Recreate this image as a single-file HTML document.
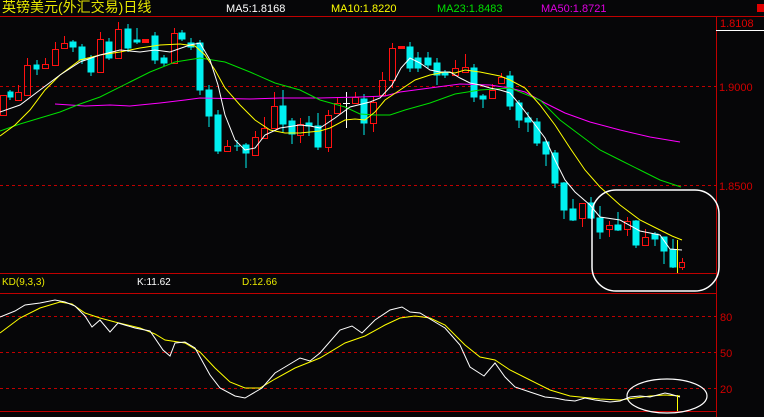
<!DOCTYPE html>
<html><head><meta charset="utf-8"><style>
html,body{margin:0;padding:0;background:#060608;width:764px;height:417px;overflow:hidden}
svg{display:block}
text{font-family:"Liberation Sans","Noto Sans CJK SC",sans-serif}
</style></head><body>
<svg width="764" height="417" viewBox="0 0 764 417" xmlns="http://www.w3.org/2000/svg" shape-rendering="crispEdges">
<rect width="764" height="417" fill="#060608"/>
<!-- header -->
<text x="2" y="12" font-size="14" fill="#e8e800">英镑美元(外汇交易)日线</text>
<text x="226" y="12" font-size="11" fill="#ffffff">MA5:1.8168</text>
<text x="331" y="12" font-size="11" fill="#ffff00">MA10:1.8220</text>
<text x="437" y="12" font-size="11" fill="#00e000">MA23:1.8483</text>
<text x="541" y="12" font-size="11" fill="#e000e0">MA50:1.8721</text>
<rect x="757" y="4" width="7" height="8" fill="#e00000"/>
<!-- frame -->
<line x1="0" y1="16.5" x2="764" y2="16.5" stroke="#c00000"/>
<line x1="716.5" y1="16" x2="716.5" y2="417" stroke="#c00000"/>
<line x1="0" y1="273.5" x2="716" y2="273.5" stroke="#c00000"/>
<line x1="0" y1="293.5" x2="716" y2="293.5" stroke="#c00000"/>
<line x1="0" y1="411.5" x2="716" y2="411.5" stroke="#c00000"/>
<line x1="716" y1="30.5" x2="764" y2="30.5" stroke="#ffffff"/>
<text x="720" y="27" font-size="11" fill="#e00000">1.8108</text>
<g stroke="#c00000" stroke-dasharray="3,3">
<line x1="0" y1="86.5" x2="716" y2="86.5"/>
<line x1="0" y1="185.5" x2="716" y2="185.5"/>
<line x1="0" y1="316.5" x2="716" y2="316.5"/>
<line x1="0" y1="352.5" x2="716" y2="352.5"/>
<line x1="0" y1="388.5" x2="716" y2="388.5"/>
</g>
<g font-size="11" fill="#d00000">
<text x="719" y="91">1.9000</text>
<text x="719" y="190">1.8500</text>
<text x="720" y="321">80</text>
<text x="720" y="357">50</text>
<text x="720" y="393">20</text>
</g>
<text x="2" y="285" font-size="10" fill="#e8e800">KD(9,3,3)</text>
<text x="137" y="285" font-size="10" fill="#ffffff">K:11.62</text>
<text x="242" y="285" font-size="10" fill="#e8e800">D:12.66</text>

<!-- candles -->
<g id="c"></g>
<g fill="#00f0f0" stroke="#00f0f0">
<line x1="10" y1="90" x2="10" y2="100"/><rect x="8" y="92" width="5" height="5"/>
<line x1="37" y1="60" x2="37" y2="75"/><rect x="34" y="65" width="5" height="4"/>
<line x1="73" y1="40" x2="73" y2="52"/><rect x="70" y="42" width="6" height="5"/>
<line x1="82" y1="44" x2="82" y2="64"/><rect x="79" y="47" width="6" height="13"/>
<line x1="91" y1="55" x2="91" y2="76"/><rect x="88" y="58" width="6" height="14"/>
<line x1="109" y1="38" x2="109" y2="60"/><rect x="106" y="42" width="6" height="16"/>
<line x1="128" y1="24" x2="128" y2="52"/><rect x="125" y="29" width="6" height="19"/>
<line x1="137" y1="28" x2="137" y2="44"/><rect x="134" y="40" width="6" height="2"/>
<line x1="155" y1="32" x2="155" y2="64"/><rect x="152" y="36" width="6" height="24"/>
<line x1="164" y1="55" x2="164" y2="66"/><rect x="161" y="58" width="6" height="5"/>
<line x1="182" y1="30" x2="182" y2="41"/><rect x="179" y="33" width="6" height="6"/>
<line x1="191" y1="38" x2="191" y2="50"/><rect x="188" y="43" width="6" height="4"/>
<line x1="200" y1="40" x2="200" y2="95"/><rect x="197" y="43" width="6" height="47"/>
<line x1="209" y1="85" x2="209" y2="127"/><rect x="206" y="90" width="6" height="26"/>
<line x1="218" y1="110" x2="218" y2="154"/><rect x="215" y="115" width="6" height="36"/>
<line x1="237" y1="140" x2="237" y2="151"/><line x1="234" y1="146" x2="240" y2="146"/>
<line x1="246" y1="143" x2="246" y2="168"/><rect x="243" y="145" width="6" height="8"/>
<line x1="283" y1="90" x2="283" y2="132"/><rect x="280" y="106" width="6" height="18"/>
<line x1="292" y1="118" x2="292" y2="144"/><rect x="289" y="121" width="6" height="13"/>
<line x1="309" y1="116" x2="309" y2="136"/><rect x="306" y="123" width="6" height="3"/>
<line x1="318" y1="113" x2="318" y2="150"/><rect x="315" y="126" width="6" height="21"/>
<line x1="364" y1="94" x2="364" y2="135"/><rect x="361" y="99" width="6" height="24"/>
<line x1="410" y1="42" x2="410" y2="72"/><rect x="407" y="47" width="6" height="21"/>
<line x1="418" y1="52" x2="418" y2="72"/><rect x="415" y="58" width="6" height="10"/>
<line x1="428" y1="52" x2="428" y2="68"/><rect x="425" y="58" width="6" height="7"/>
<line x1="437" y1="58" x2="437" y2="85"/><rect x="434" y="63" width="6" height="12"/>
<line x1="445" y1="70" x2="445" y2="78"/><rect x="442" y="73" width="6" height="2"/>
<line x1="474" y1="64" x2="474" y2="102"/><rect x="471" y="68" width="6" height="29"/>
<line x1="483" y1="94" x2="483" y2="108"/><rect x="480" y="96" width="6" height="3"/>
<line x1="510" y1="71" x2="510" y2="110"/><rect x="507" y="76" width="6" height="30"/>
<line x1="519" y1="100" x2="519" y2="128"/><rect x="516" y="103" width="6" height="17"/>
<line x1="528" y1="112" x2="528" y2="132"/><rect x="525" y="118" width="6" height="4"/>
<line x1="537" y1="118" x2="537" y2="146"/><rect x="534" y="122" width="6" height="21"/>
<line x1="546" y1="140" x2="546" y2="166"/><rect x="543" y="142" width="6" height="12"/>
<line x1="555" y1="150" x2="555" y2="188"/><rect x="552" y="153" width="6" height="30"/>
<line x1="564" y1="182" x2="564" y2="219"/><rect x="561" y="183" width="6" height="27"/>
<line x1="573" y1="199" x2="573" y2="221"/><rect x="570" y="209" width="6" height="11"/>
<line x1="591" y1="197" x2="591" y2="219"/><rect x="588" y="203" width="6" height="15"/>
<line x1="600" y1="206" x2="600" y2="239"/><rect x="597" y="218" width="6" height="14"/>
<line x1="618" y1="212" x2="618" y2="231"/><rect x="615" y="225" width="6" height="5"/>
<line x1="636" y1="220" x2="636" y2="248"/><rect x="633" y="221" width="6" height="24"/>
<line x1="655" y1="232" x2="655" y2="246"/><rect x="652" y="234" width="6" height="5"/>
<line x1="664" y1="237" x2="664" y2="264"/><rect x="661" y="237" width="6" height="14"/>
<line x1="673" y1="239" x2="673" y2="268"/><rect x="670" y="250" width="6" height="17"/>
</g>
<g fill="none" stroke="#ff1010">
<rect x="0.5" y="95.5" width="6" height="20"/>
<rect x="15.5" y="92.5" width="6" height="8"/><line x1="18.5" y1="85" x2="18.5" y2="92"/>
<rect x="24.5" y="65.5" width="6" height="30"/><line x1="27.5" y1="58" x2="27.5" y2="65"/>
<rect x="42.5" y="64.5" width="6" height="4"/><line x1="45.5" y1="58" x2="45.5" y2="64"/>
<rect x="52.5" y="49.5" width="6" height="16"/><line x1="55.5" y1="42" x2="55.5" y2="49"/>
<rect x="61.5" y="43.5" width="6" height="5"/><line x1="64.5" y1="36" x2="64.5" y2="43"/>
<rect x="97.5" y="39.5" width="6" height="33"/><line x1="100.5" y1="32" x2="100.5" y2="39"/>
<rect x="115.5" y="29.5" width="6" height="29"/><line x1="118.5" y1="22" x2="118.5" y2="29"/>
<rect x="142.5" y="39.5" width="6" height="3" fill="#ff1010"/>
<rect x="171.5" y="33.5" width="6" height="30"/><line x1="174.5" y1="28" x2="174.5" y2="33"/>
<rect x="224.5" y="146.5" width="6" height="5"/><line x1="227.5" y1="140" x2="227.5" y2="146"/>
<rect x="252.5" y="137.5" width="6" height="18"/><line x1="255.5" y1="131" x2="255.5" y2="137"/>
<rect x="261.5" y="128.5" width="6" height="10"/><line x1="264.5" y1="117" x2="264.5" y2="128"/>
<rect x="271.5" y="106.5" width="6" height="22"/><line x1="274.5" y1="92" x2="274.5" y2="106"/>
<rect x="297.5" y="124.5" width="6" height="11"/><line x1="300.5" y1="118" x2="300.5" y2="124"/><line x1="300.5" y1="136" x2="300.5" y2="143"/>
<rect x="325.5" y="115.5" width="6" height="32"/><line x1="328.5" y1="110" x2="328.5" y2="115"/><line x1="328.5" y1="148" x2="328.5" y2="152"/>
<rect x="334.5" y="103.5" width="6" height="10"/><line x1="337.5" y1="97" x2="337.5" y2="103"/>
<rect x="352.5" y="97.5" width="6" height="6"/><line x1="355.5" y1="92" x2="355.5" y2="97"/>
<rect x="370.5" y="102.5" width="6" height="21"/><line x1="373.5" y1="96" x2="373.5" y2="102"/><line x1="373.5" y1="124" x2="373.5" y2="132"/>
<rect x="379.5" y="80.5" width="6" height="15"/><line x1="382.5" y1="72" x2="382.5" y2="80"/>
<rect x="389.5" y="48.5" width="6" height="32"/><line x1="392.5" y1="43" x2="392.5" y2="48"/><line x1="392.5" y1="81" x2="392.5" y2="88"/>
<rect x="398.5" y="46.5" width="6" height="2" fill="#ff1010"/>
<rect x="452.5" y="68.5" width="6" height="7"/><line x1="455.5" y1="60" x2="455.5" y2="68"/>
<rect x="462.5" y="67.5" width="6" height="5"/><line x1="465.5" y1="54" x2="465.5" y2="67"/>
<rect x="489.5" y="90.5" width="6" height="8"/><line x1="492.5" y1="84" x2="492.5" y2="90"/>
<rect x="498.5" y="77.5" width="6" height="6"/><line x1="501.5" y1="73" x2="501.5" y2="77"/>
<rect x="579.5" y="203.5" width="6" height="15"/><line x1="582.5" y1="218" x2="582.5" y2="227"/>
<rect x="606.5" y="225.5" width="6" height="4"/><line x1="609.5" y1="221" x2="609.5" y2="225"/><line x1="609.5" y1="230" x2="609.5" y2="237"/>
<rect x="624.5" y="221.5" width="6" height="8"/><line x1="627.5" y1="217" x2="627.5" y2="221"/><line x1="627.5" y1="230" x2="627.5" y2="236"/>
<rect x="642.5" y="237.5" width="6" height="8"/><line x1="645.5" y1="229" x2="645.5" y2="237"/>
<rect x="679.5" y="262.5" width="5" height="5"/><line x1="682.5" y1="258" x2="682.5" y2="262"/><line x1="682.5" y1="268" x2="682.5" y2="270"/>
</g>
<line x1="346.5" y1="92" x2="346.5" y2="128" stroke="#ffffff"/>
<line x1="343" y1="103.5" x2="350" y2="103.5" stroke="#ffffff"/>

<!-- MA lines -->
<g fill="none" stroke-width="1" shape-rendering="auto">
<polyline stroke="#ff00ff" points="55,104 85,106 110,105 130,106 160,103 185,100 200,98 250,99 280,98 320,98 360,97 385,96 400,92 430,88 460,84 490,85 510,88 525,92 545,103 565,113 590,122 620,130 650,137 680,142"/>
<polyline stroke="#00e000" points="0,131 20,124 40,118 60,112 80,104 100,97 130,82 150,72 175,62 200,58 225,62 250,72 275,83 300,90 320,100 345,107 360,114 375,115 390,115 405,110 430,103 455,94 480,90 510,88 540,100 560,120 580,135 600,150 620,160 640,170 660,180 681,187"/>
<polyline stroke="#ffff00" points="0,136 15,125 30,110 45,90 60,75 80,60 100,55 120,52 140,48 160,45 180,44 195,46 205,55 215,70 225,88 240,105 255,120 270,130 285,133 300,133 320,131 330,128 345,120 355,119 365,120 375,112 385,100 400,90 415,80 430,75 445,72 455,73 465,70 480,72 500,76 510,80 525,88 540,105 555,125 570,148 585,170 600,187 620,205 640,220 660,230 672,236 682,240"/>
<polyline stroke="#ffffff" points="0,112 20,105 40,90 60,75 80,62 100,55 120,50 140,52 155,50 170,52 190,45 200,43 210,60 218,85 225,115 235,140 245,150 255,148 265,135 280,128 300,125 310,126 320,128 335,118 350,107 370,102 380,98 392,85 401,68 410,58 420,63 430,70 440,72 450,72 460,78 470,83 480,85 490,88 500,90 510,93 520,105 530,118 545,138 555,160 565,180 575,192 590,205 600,217 620,220 640,231 660,235 670,249 682,250"/>
</g>
<line x1="677.5" y1="240" x2="677.5" y2="273" stroke="#ffff00"/>
<rect x="592" y="190" width="127" height="101" rx="24" fill="none" stroke="#ffffff" stroke-width="1.5" shape-rendering="auto"/>

<!-- KD -->
<g fill="none" shape-rendering="auto">
<polyline stroke="#ffff00" points="0,333 20,318 40,308 60,302 72,304 85,313 100,318 115,322 140,328 155,334 165,340 185,343 200,352 215,368 230,382 245,388 260,388 275,379 295,368 320,358 345,343 365,336 385,325 400,318 415,316 430,318 445,325 465,345 480,357 495,360 510,370 530,380 550,390 570,396 600,399 620,400 635,398 650,396 665,395 680,396"/>
<polyline stroke="#ffffff" points="0,317 15,311 25,305 40,303 55,300 65,302 75,306 85,316 92,327 100,320 110,332 118,323 135,328 150,331 163,350 170,356 175,343 185,342 195,348 210,375 220,388 235,396 245,398 262,388 275,373 285,367 300,358 310,361 320,353 340,330 352,326 362,333 375,320 390,310 402,307 410,312 420,313 430,319 445,328 460,345 470,367 484,376 495,363 505,377 515,387 530,392 545,397 555,398 565,400 575,401 585,398 595,400 610,402 620,401 630,397 640,396 650,397 665,393 670,394 680,397"/>
<ellipse cx="667" cy="396" rx="40" ry="17" stroke="#ffffff" stroke-width="1.2"/>
</g>
<line x1="677.5" y1="395" x2="677.5" y2="411" stroke="#ffff00"/>
</svg>
</body></html>
